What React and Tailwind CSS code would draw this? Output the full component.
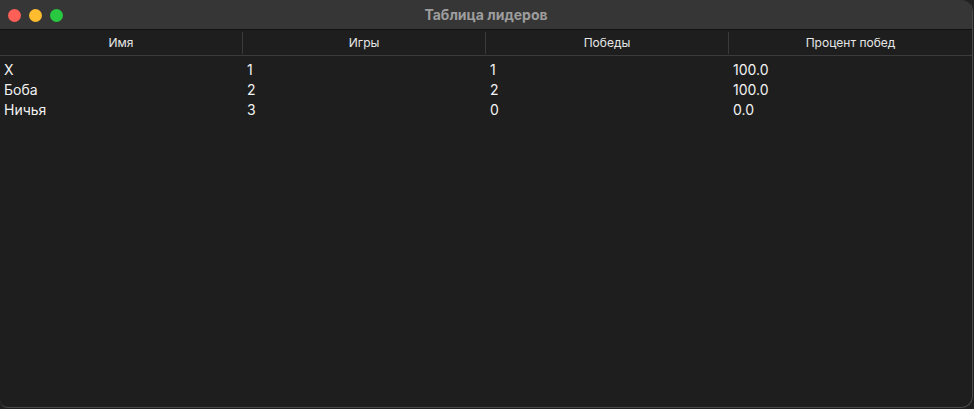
const COLUMNS = ['Имя', 'Игры', 'Победы', 'Процент побед'];

const ROWS = [
  ['X', '1', '1', '100.0'],
  ['Боба', '2', '2', '100.0'],
  ['Ничья', '3', '0', '0.0'],
];

export default function App() {
  return (
    <div
      className="w-[974px] h-[409px] bg-[#202020] overflow-hidden"
      style={{ fontFamily: 'Inter, "Noto Sans", sans-serif' }}
    >
      <div className="w-[973px] h-[408px] bg-[#1e1e1e] rounded-br-[12px] rounded-bl-[8px] rounded-tr-[12px] border-r border-b border-[#4a4a4a] overflow-hidden flex flex-col">
        {/* title bar */}
        <div className="relative h-[30px] shrink-0 bg-[#363636] border-b border-[#111] flex items-center justify-center">
          <div className="absolute left-[8px] top-[9px] flex gap-[8px]">
            <span className="w-[13px] h-[13px] rounded-full bg-[#fe5f57]" />
            <span className="w-[13px] h-[13px] rounded-full bg-[#febc2e]" />
            <span className="w-[13px] h-[13px] rounded-full bg-[#28c840]" />
          </div>
          <span className="text-[14px] font-bold text-[#9d9d9d]">Таблица лидеров</span>
        </div>

        {/* header */}
        <div className="h-[26px] shrink-0 bg-[#1e1e1e] border-b border-[#3b3b3b] grid grid-cols-4 items-center">
          {COLUMNS.map((c, i) => (
            <div
              key={c}
              className={
                'h-[22px] flex items-center justify-center text-[12px] text-[#e6e6e6] ' +
                (i < 3 ? 'border-r border-[#3a3a3a]' : '')
              }
            >
              {c}
            </div>
          ))}
        </div>

        {/* rows */}
        <div className="pt-[4px]">
          {ROWS.map((r, i) => (
            <div key={i} className="grid grid-cols-4 h-[20px] items-center">
              {r.map((v, j) => (
                <div key={j} className="pl-[4px] text-[14px] text-[#f2f2f2] leading-[20px]">
                  {v}
                </div>
              ))}
            </div>
          ))}
        </div>
      </div>
    </div>
  );
}
